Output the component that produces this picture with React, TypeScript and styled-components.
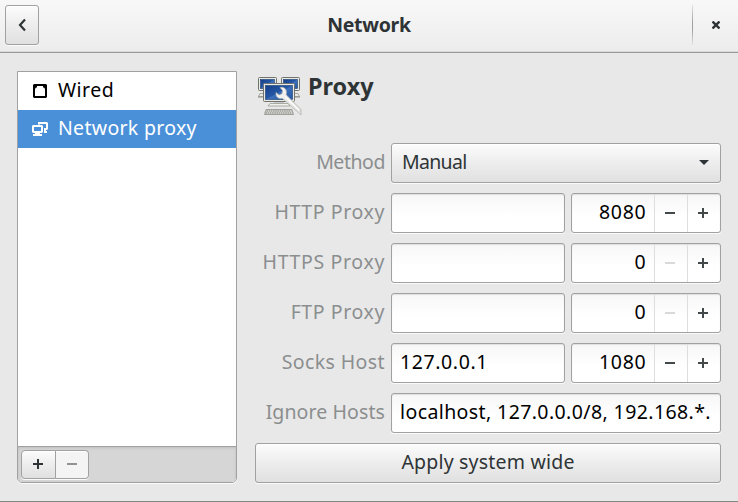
import React from "react";
import styled, { createGlobalStyle, css } from "styled-components";

const Global = createGlobalStyle`
  * { box-sizing: border-box; }
  body { margin: 0; background: #e8e8e8; overflow: hidden; }
  button, input { font: inherit; color: inherit; margin: 0; padding: 0; }
`;

const raised = css`
  border: 1px solid #a1a1a1;
  background: linear-gradient(#fcfcfc, #ededed 50%, #e0e0e0);
  box-shadow: 0 1px 0 #fafafa, inset 0 1px 0 #ffffff;
`;

const Window = styled.div`
  width: 738px;
  height: 502px;
  display: flex;
  flex-direction: column;
  background: #e8e8e8;
  border-bottom: 1px solid #858585;
  font-family: "Noto Sans", sans-serif;
  font-size: 19.5px;
  line-height: 26px;
  color: #2e3436;
`;

const Header = styled.header`
  height: 53px;
  flex: none;
  display: grid;
  grid-template-columns: 46px 1fr 46px;
  background: linear-gradient(#f8f8f8, #ececec);
  border-bottom: 1px solid #999999;
  box-shadow: inset 0 -1px 0 #d9d9d9;
`;

const BackButton = styled.button`
  ${raised}
  width: 34px;
  height: 40px;
  margin: 5px 0 0 5px;
  border-radius: 3px;
  display: flex;
  align-items: center;
  justify-content: center;
`;

const Title = styled.h1`
  margin: 12px 0 0;
  font-size: 19.5px;
  line-height: 26px;
  font-weight: 700;
  text-align: center;
`;

const CloseButton = styled.button`
  width: 46px;
  height: 40px;
  margin-top: 5px;
  border: 0;
  border-left: 1px solid;
  border-image: linear-gradient(#e5e5e5, #a0a0a0 45%, #a0a0a0 60%, #e5e5e5) 1;
  background: none;
  display: flex;
  align-items: center;
  justify-content: center;
`;

const Text = styled.span<{ $spacing?: number }>`
  white-space: pre;
  letter-spacing: ${(p) => p.$spacing ?? 0}px;
`;

const Body = styled.main`
  flex: 1;
  display: flex;
  gap: 18px;
  padding: 18px 17px;
`;

const Sidebar = styled.aside`
  width: 220px;
  height: 412px;
  flex: none;
  display: flex;
  flex-direction: column;
  border: 1px solid #a1a1a1;
  border-radius: 0 0 5px 5px;
  background: #fff;
  box-shadow: 0 1px 0 #fbfbfb;
  overflow: hidden;
`;

const DeviceList = styled.nav`
  flex: 1;
`;

const DeviceRow = styled.div<{ $selected?: boolean }>`
  height: 38px;
  padding: 0 0 0 14px;
  display: flex;
  align-items: center;
  gap: 10px;
  color: ${(p) => (p.$selected ? "#fff" : "#000")};
  background: ${(p) => (p.$selected ? "#4a90d9" : "#fff")};
  & > span {
    padding-bottom: 2px;
  }
`;

const ListToolbar = styled.div`
  height: 36px;
  display: flex;
  padding: 3px;
  background: #d6d6d6;
  border-top: 1px solid #a1a1a1;
  box-shadow: inset 0 1px 3px #bdbdbd;
`;

const ToolButton = styled.button`
  ${raised}
  width: 35px;
  height: 29px;
  display: flex;
  align-items: center;
  justify-content: center;
  padding: 0 2px 2px 0;
  border-radius: 4px 0 0 4px;
  & + & {
    width: 33px;
    border-left: 0;
    border-radius: 0 4px 4px 0;
    background: #f4f4f4;
    color: #8f9192;
    padding-right: 0;
  }
`;

const Panel = styled.section`
  width: 466px;
`;

const PanelHeading = styled.div`
  height: 72px;
  display: flex;
  gap: 5px;
`;

const PanelTitle = styled.h2`
  margin: 0;
  font-size: 23.4px;
  line-height: 31px;
  font-weight: 700;
`;

const Form = styled.div`
  display: grid;
  grid-template-columns: 130px 174px 150px;
  column-gap: 6px;
  grid-auto-rows: 40px;
  row-gap: 10px;
`;

const Label = styled.label`
  padding-top: 6px;
  text-align: right;
  color: #8b8e8f;
`;

const Combo = styled.button`
  ${raised}
  grid-column: span 2;
  border-radius: 3px;
  display: flex;
  align-items: center;
  justify-content: space-between;
  padding: 0 11px 2px 10px;
`;

const field = css`
  border: 1px solid #a1a1a1;
  border-radius: 3px;
  background: linear-gradient(#f7f7f7, #ffffff 60%);
  box-shadow: 0 1px 0 #fafafa, inset 0 1px 1px #dedede;
  color: #000;
`;

const Entry = styled.div<{ $wide?: boolean }>`
  ${field}
  grid-column: span ${(p) => (p.$wide ? 2 : 1)};
  min-width: 0;
  padding: 5px 9px 0 8px;
  overflow: hidden;
`;

const Spin = styled.div`
  ${field}
  display: grid;
  grid-template-columns: 82px 33px 33px;
`;

const SpinValue = styled.span`
  padding: 5px 7.500px 0 0;
  text-align: right;
  letter-spacing: 0.75px;
`;

const SpinButton = styled.button<{ $off?: boolean }>`
  border: 0;
  border-left: 1px solid #dedede;
  background: none;
  color: ${(p) => (p.$off ? "#d8d9d9" : "#43494b")};
  display: flex;
  align-items: center;
  justify-content: center;
  padding-right: 2px;
`;

const ApplyButton = styled.button`
  ${raised}
  grid-column: 1 / -1;
  border-radius: 3px;
  padding-bottom: 2px;
`;

const Sign = ({ plus }: { plus?: boolean }) => (
  <svg width="10" height="10" viewBox="0 0 10 10" fill="currentColor">
    <path d={plus ? "M0 4h4V0h2v4h4v2H6v4H4V6H0z" : "M0 4h10v2H0z"} />
  </svg>
);

const WiredIcon = () => (
  <svg width="16" height="16" viewBox="0 0 16 16">
    <path
      fill="#000"
      fillRule="evenodd"
      d="M2 1h12l1 1v12l-1 1H2l-1-1V2zM5 3v1.500H4L3 6v7h10V6l-1-1.500h-1V3z"
    />
  </svg>
);

const ProxyIcon = () => (
  <svg width="16" height="16" viewBox="0 0 16 16" fill="#fff">
    <path fillRule="evenodd" d="M1 4h9l1 1v6l-1 1H1l-1-1V5zM2 6v4h7V6z" />
    <path d="M3 12h5v1h2v2H1v-2h2z" />
    <path d="M6 1h9l1 1v6l-1 1h-1v1h1v2h-3V7h2V3H8v.5H6z" />
  </svg>
);

const Monitor = ({ x, y, w, h }: { x: number; y: number; w: number; h: number }) => (
  <g>
    <rect x={x} y={y} width={w} height={h} rx="1" fill="#e9eae6" stroke="#70736e" />
    <rect x={x + 2} y={y + 2} width={w - 4} height={h - 4} fill="url(#screen)" stroke="#183c70" strokeWidth=".6" />
  </g>
);

const ProxyArtwork = () => (
  <svg width="48" height="48" viewBox="0 0 48 48">
    <defs>
      <linearGradient id="screen" x1="0" y1="0" x2="1" y2="1">
        <stop offset="0" stopColor="#173f88" />
        <stop offset=".48" stopColor="#2457a6" />
        <stop offset=".52" stopColor="#3b70b9" />
        <stop offset="1" stopColor="#2457a2" />
      </linearGradient>
      <linearGradient id="steel" x1="0" y1="0" x2="1" y2="1">
        <stop offset="0" stopColor="#fafafa" />
        <stop offset=".6" stopColor="#e6e7e4" />
        <stop offset="1" stopColor="#d8d9d6" stopOpacity=".3" />
      </linearGradient>
    </defs>
    <path d="M5 22.500h4v3H3.500zM39 22.500h4l1.500 3H39z" fill="#e9eae6" stroke="#a5a7a2" />
    <path d="M3 26h6M39 26h6" stroke="#8a8d87" />
    <Monitor x={3.5} y={6.5} w={18} h={13} />
    <Monitor x={26.5} y={6.5} w={18} h={13} />
    <path d="M19 30h10v4H19z" fill="#c9cbc6" />
    <path d="M15 32.500h18l2 2.500H13z" fill="#f0f0ed" stroke="#9a9c97" strokeWidth=".8" />
    <Monitor x={8.5} y={12.5} w={31} h={18} />
    <path d="M11 38.500h26l1.500 5h-29z" fill="#deded9" stroke="#8e918b" strokeWidth=".8" />
    <path d="M11.500 40h25M10.500 42h27" stroke="#777a75" strokeDasharray="1.500 .7" />
    <path
      d="M25 16.500c4-1 6.500 1.500 6.500 5l-.3 2.300L46 38.500v5.500L27.500 27.500c-4 .6-7-1.500-6.500-6l3 2.500 3-1.300.5-3.200z"
      fill="url(#steel)"
      stroke="#aaada8"
      strokeWidth=".7"
    />
    <path d="M30 25.500 44 39" stroke="#fff" strokeWidth="1.200" />
  </svg>
);

const DropArrow = () => (
  <svg width="10" height="6" viewBox="0 0 10 6">
    <path d="M0 1h10L5 6z" fill="#2e3436" />
  </svg>
);

const proxies = [
  { label: "HTTP Proxy", host: "", port: "8080", spacing: 0.6 },
  { label: "HTTPS Proxy", host: "", port: "0", spacing: 0.65 },
  { label: "FTP Proxy", host: "", port: "0", spacing: 0.6 },
  { label: "Socks Host", host: "127.0.0.1", port: "1080", spacing: 0.4 },
];

export default function App() {
  return (
    <>
      <Global />
      <Window>
        <Header>
          <BackButton aria-label="Back">
            <svg width="8" height="14" viewBox="0 0 8 14">
              <path d="M7 1.500 2 7l5 5.500" fill="none" stroke="#2e3436" strokeWidth="2.200" />
            </svg>
          </BackButton>
          <Title><Text $spacing={-0.3}>Network</Text></Title>
          <CloseButton aria-label="Close">
            <svg width="8" height="8" viewBox="0 0 8 8">
              <path d="m.5.5 7 7M7.500.5l-7 7" stroke="#2e3436" strokeWidth="2.400" />
            </svg>
          </CloseButton>
        </Header>
        <Body>
          <Sidebar>
            <DeviceList>
              <DeviceRow><WiredIcon /><Text $spacing={0.45}>Wired</Text></DeviceRow>
              <DeviceRow $selected><ProxyIcon /><Text $spacing={0.3}>Network proxy</Text></DeviceRow>
            </DeviceList>
            <ListToolbar>
              <ToolButton aria-label="Add"><Sign plus /></ToolButton>
              <ToolButton aria-label="Remove"><Sign /></ToolButton>
            </ListToolbar>
          </Sidebar>
          <Panel>
            <PanelHeading>
              <ProxyArtwork />
              <PanelTitle><Text>Proxy</Text></PanelTitle>
            </PanelHeading>
            <Form>
              <Label><Text $spacing={-0.45}>Method</Text></Label>
              <Combo><Text $spacing={-0.7}>Manual</Text><DropArrow /></Combo>
              {proxies.map((p) => (
                <React.Fragment key={p.label}>
                  <Label><Text $spacing={p.spacing}>{p.label}</Text></Label>
                  <Entry><Text $spacing={0.6}>{p.host}</Text></Entry>
                  <Spin>
                    <SpinValue>{p.port}</SpinValue>
                    <SpinButton $off={p.port === "0"} aria-label="Decrease"><Sign /></SpinButton>
                    <SpinButton aria-label="Increase"><Sign plus /></SpinButton>
                  </Spin>
                </React.Fragment>
              ))}
              <Label><Text $spacing={0.1}>Ignore Hosts</Text></Label>
              <Entry $wide><Text $spacing={0.4}>localhost, 127.0.0.0/8, 192.168.*.</Text></Entry>
              <ApplyButton><Text $spacing={0.2}>Apply system wide</Text></ApplyButton>
            </Form>
          </Panel>
        </Body>
      </Window>
    </>
  );
}
